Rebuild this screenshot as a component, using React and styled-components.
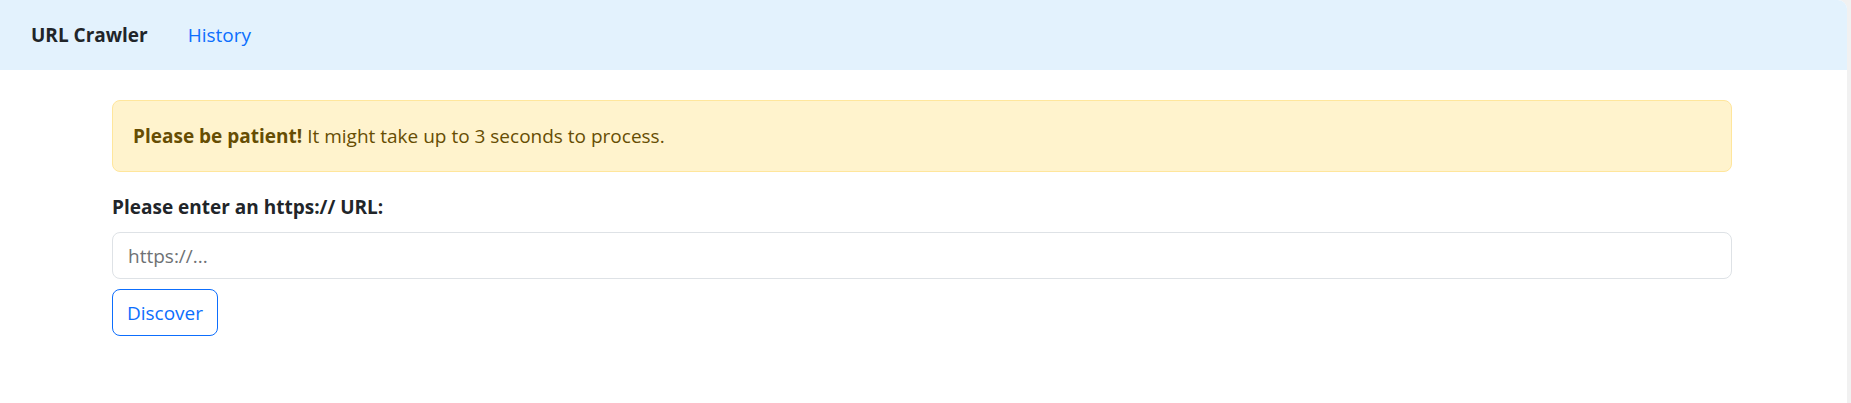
import React from "react";
import styled, { createGlobalStyle } from "styled-components";

const GlobalStyle = createGlobalStyle`
  html, body {
    margin: 0;
    padding: 0;
    background: #f1f1f1;
  }
  body {
    font-family: "Open Sans", "Noto Sans", sans-serif;
    color: #212529;
  }
`;

const Page = styled.div`
  width: 1847px;
  height: 403px;
  background: #ffffff;
  border-top-right-radius: 9px;
  overflow: hidden;
`;

const Navbar = styled.nav`
  display: flex;
  align-items: center;
  height: 70px;
  padding-left: 31px;
  background: #e3f2fd;
`;

const Brand = styled.span`
  font-size: 19px;
  font-weight: 700;
  color: #212529;
  margin-right: 40px;
`;

const NavLink = styled.a`
  font-size: 19px;
  color: #0d6efd;
  text-decoration: none;
`;

const Main = styled.main`
  width: 1620px;
  padding: 30px 0 0 112px;
`;

const Alert = styled.div`
  box-sizing: border-box;
  height: 72px;
  display: flex;
  align-items: center;
  padding: 0 20px;
  margin-bottom: 20px;
  font-size: 19px;
  color: #664d03;
  background: #fff3cd;
  border: 1px solid #ffe69c;
  border-radius: 8px;

  strong {
    font-weight: 700;
    margin-right: 5px;
  }
`;

const Label = styled.label`
  display: block;
  font-size: 19px;
  font-weight: 700;
  line-height: 30px;
  margin-bottom: 10px;
`;

const Input = styled.input`
  display: block;
  box-sizing: border-box;
  width: 100%;
  height: 47px;
  padding: 0 15px;
  font-family: inherit;
  font-size: 19px;
  color: #212529;
  border: 1px solid #dee2e6;
  border-radius: 8px;
  outline: none;

  &::placeholder {
    color: #6e7174;
  }
`;

const Button = styled.button`
  box-sizing: border-box;
  margin-top: 10px;
  width: 106px;
  height: 47px;
  padding: 0;
  font-family: inherit;
  font-size: 19px;
  color: #0d6efd;
  background: transparent;
  border: 1px solid #0d6efd;
  border-radius: 8px;
  cursor: pointer;
`;

export default function App() {
  return (
    <>
      <GlobalStyle />
      <Page>
        <Navbar>
          <Brand>URL Crawler</Brand>
          <NavLink href="#">History</NavLink>
        </Navbar>
        <Main>
          <Alert>
            <strong>Please be patient!</strong> It might take up to 3 seconds to process.
          </Alert>
          <Label htmlFor="url">Please enter an https:// URL:</Label>
          <Input id="url" type="text" placeholder="https://..." />
          <Button type="button">Discover</Button>
        </Main>
      </Page>
    </>
  );
}
